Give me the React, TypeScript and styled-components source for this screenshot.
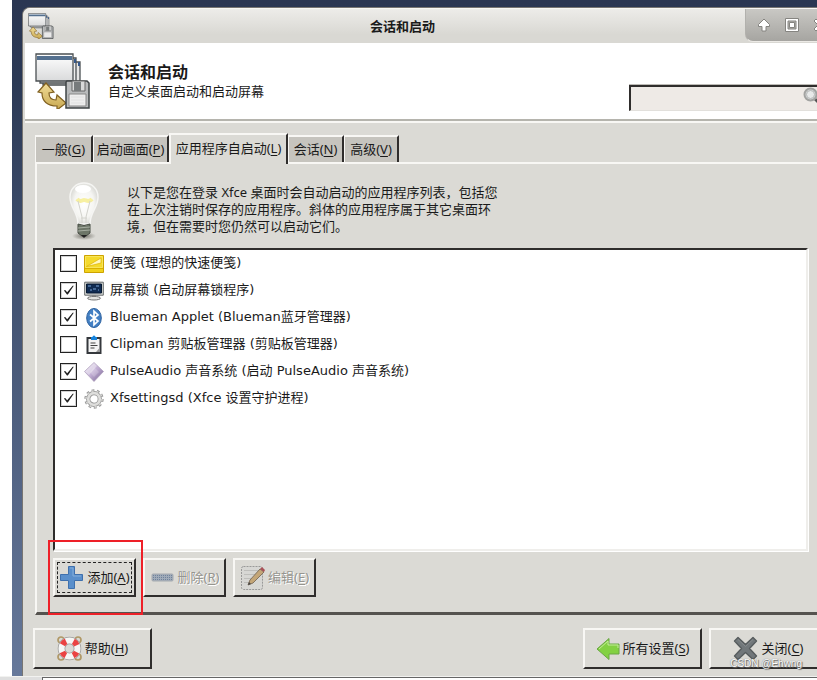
import React, { useState } from 'react';
import styled, { createGlobalStyle, css } from 'styled-components';

const face = '#dbdad5';
const dark = '#2f2d2c';
const light = '#f8f7f4';

const GlobalStyle = createGlobalStyle`
  *, *::before, *::after { box-sizing: border-box; }
  body {
    margin: 0;
    background: #fff;
    color: #1a1a1a;
    font: 13px/17px "DejaVu Sans", "Noto Sans CJK SC", sans-serif;
  }
  button, input { font: inherit; color: inherit; }
`;

const Screen = styled.div`
  min-height: 100vh;
  display: flex;
  flex-direction: column;
  overflow: hidden;
`;

const Desktop = styled.div`
  flex: 1;
  display: flex;
  margin-left: 12px;
  padding: 7px 0 0 10px;
  background: linear-gradient(#2a3652 0, #2b3955 12%, #3f4f6e 38%, #66789a 100%);
`;

const Window = styled.main`
  flex: 1 0 auto;
  width: calc(100% + 20px);
  display: flex;
  flex-direction: column;
  background: ${face};
  border: 1px solid #777572;
  border-bottom: 0;
  border-radius: 8px 0 0 0;
  overflow: hidden;
`;

const TitleBar = styled.header`
  height: 35px;
  display: flex;
  align-items: center;
  padding-left: 5px;
  background: linear-gradient(#edece9, #d9d8d3 75%);
  border-top: 1px solid #f7f6f4;
`;

const WindowTitle = styled.h1`
  flex: 1;
  margin: 0;
  padding-left: 6px;
  text-align: center;
  font-size: 13px;
  line-height: 17px;
  font-weight: 700;
`;

const WindowControls = styled.div`
  align-self: flex-start;
  width: 91px;
  height: 33px;
  display: flex;
  align-items: center;
  gap: 12px;
  padding-left: 10px;
  background: linear-gradient(#c9c8c4, #a6a5a1);
  border-left: 1px solid #b2b1ad;
  border-bottom: 1px solid #eceae6;
  border-radius: 0 0 0 8px;
`;

const ControlButton = styled.button`
  width: 16px;
  height: 16px;
  padding: 0;
  border: 0;
  background: none;
  display: block;
`;

const Banner = styled.section`
  height: 78px;
  display: flex;
  align-items: center;
  margin-left: 2px;
  padding: 0 7px 0 10px;
  background: #fff;
  border-bottom: 2px solid #b5b4ad;
  box-shadow: 0 2px 0 ${light};
`;

const BannerText = styled.div`
  flex: 1;
  padding-left: 17px;
`;

const Heading = styled.h2`
  margin: 0;
  font-size: 16px;
  line-height: 20px;
  font-weight: 700;
`;

const Subtitle = styled.p`
  margin: 0;
  line-height: 17px;
`;

const SearchBox = styled.label`
  align-self: flex-end;
  width: 200px;
  height: 26px;
  margin-bottom: 8px;
  padding-right: 5px;
  display: flex;
  background: #eeeae6;
  border: 2px solid ${dark};
  border-width: 2px 1px 1px 2px;
  border-bottom-color: #e2e0dc;
  box-shadow: 0 -1px 0 #bdbbb6;
`;

const SearchInput = styled.input`
  flex: 1;
  min-width: 0;
  border: 0;
  background: transparent;
  outline: 0;
`;

const Notebook = styled.section`
  flex: 1;
  display: flex;
  flex-direction: column;
  padding: 12px 0 0 12px;
`;

const TabList = styled.div`
  height: 29px;
  display: flex;
  align-items: flex-end;
  position: relative;
`;

const Tab = styled.button<{ $active: boolean; $width: number }>`
  width: ${p => p.$width}px;
  height: 27px;
  padding: 0;
  white-space: nowrap;
  background: #c6c4be;
  border: 2px solid ${light};
  border-width: 2px 2px 0 1px;
  border-right-color: ${dark};
  ${p => p.$active && css`
    height: 31px;
    margin-bottom: -2px;
    padding-bottom: 3px;
    background: ${face};
    border-left-width: 2px;
  `}
`;

const Mnemonic = styled.span`
  font-family: "Noto Sans", sans-serif;
  u { text-underline-offset: 2px; }
`;

const Panel = styled.div`
  flex: 1;
  display: flex;
  flex-direction: column;
  padding: 17px 28px 15px 16px;
  border-top: 2px solid ${light};
  border-left: 2px solid ${light};
  border-bottom: 3px solid #55534f;
`;

const Intro = styled.div`
  display: flex;
  align-items: flex-start;
  height: 67px;
  padding-left: 14px;
`;

const Description = styled.p`
  margin: 3px 0 0 26px;
  line-height: 17px;
  font-family: "Noto Sans", "Noto Sans CJK SC", sans-serif;
  white-space: nowrap;
  span { display: block; }
`;

const AppList = styled.ul`
  flex: 1;
  margin: 0;
  padding: 0;
  list-style: none;
  background: #fff;
  border: 2px solid ${dark};
  border-right-color: #efeeeb;
  border-bottom-color: #efeeeb;
  box-shadow: 1px 1px 0 #fff;
`;

const AppRow = styled.label`
  height: 27px;
  display: flex;
  align-items: center;
  padding-left: 5px;
  white-space: nowrap;
`;

const CheckBox = styled.input`
  appearance: none;
  width: 17px;
  height: 17px;
  margin: 0 7px 0 0;
  border: 1px solid #222;
  outline: 1px solid #77777755;
  outline-offset: -2px;
  background: #fff;
  &:checked::before {
    content: "";
    display: block;
    width: 11px;
    height: 10px;
    margin: 2px;
    background: #222;
    clip-path: polygon(8% 56%, 20% 50%, 38% 72%, 88% 8%, 98% 8%, 44% 96%, 36% 96%);
  }
`;

const AppName = styled.span`
  padding: 0 0 2px 6px;
`;

const Actions = styled.div`
  display: flex;
  gap: 7px;
  padding-top: 7px;
`;

const Marked = styled.div`
  position: relative;
`;

const RedFrame = styled.div`
  position: absolute;
  inset: -18px -7px -18px -5px;
  border: 2px solid #ee2028;
  pointer-events: none;
  z-index: 1;
`;

const PushButton = styled.button<{ $width: number; $tall?: boolean }>`
  width: ${p => p.$width}px;
  height: ${p => (p.$tall ? 41 : 39)}px;
  display: flex;
  align-items: center;
  justify-content: center;
  gap: 3px;
  padding: 0;
  white-space: nowrap;
  background: ${face};
  border: 2px solid ${light};
  border-right-color: ${dark};
  border-bottom-color: ${dark};
  &:disabled { color: #96958f; text-shadow: 1px 1px 0 #fff; }
`;

const FocusedButton = styled(PushButton)`
  outline: 1px dashed #222;
  outline-offset: -5px;
`;

const Footer = styled.footer`
  display: flex;
  gap: 7px;
  padding: 13px 8px 7px 10px;
  position: relative;
`;

const Spacer = styled.div`
  flex: 1;
`;

const Watermark = styled.span`
  position: absolute;
  right: 34px;
  bottom: 5px;
  font: 10px/14px "Liberation Sans", sans-serif;
  color: #fff;
  text-shadow: 0 0 1px #555, 1px 1px 1px #666;
`;

const PageEdge = styled.div`
  height: 4px;
  padding-left: 42px;
  background: #dfdfdf;
  border-top: 1px solid #f2f2f0;
`;

const PageSheet = styled.div`
  height: 3px;
  background: #fff;
  border: 1px solid #666;
  border-width: 1px 0 0 1px;
`;

const SessionIcon = ({ size }: { size: number }) => (
  <svg width={size} height={size} viewBox="0 0 56 56" aria-hidden="true">
    <defs>
      <linearGradient id="pane" x2="0" y2="1"><stop stopColor="#fff" /><stop offset="1" stopColor="#d9dadb" /></linearGradient>
      <linearGradient id="gold" x2="0" y2="1"><stop stopColor="#f0dc98" /><stop offset="1" stopColor="#c8a850" /></linearGradient>
    </defs>
    <g stroke="#4a4f52" strokeWidth="1.3">
      <path d="M8 9h37v23H8z" fill="#e5e5e5" />
      <path d="M5 5h36v25H5z" fill="#eee" />
      <path d="M1 1h37v27H1z" fill="url(#pane)" />
    </g>
    <path d="M2 3h35v4H2z" fill="#54708f" />
    <path d="M39 6h2v4h-2zM43 9h2v4h-2z" fill="#36598a" />
    <path d="M11 30l8 9-5 1c0 5 2 7 7 7l1-5 9 8-9 7v-4C12 53 7 48 7 40l-4-1z" fill="url(#gold)" stroke="#806020" strokeWidth="1.2" />
    <path d="M32 28h20l2 2v25H31V29z" fill="#b9bbbc" stroke="#3f4446" strokeWidth="1.5" />
    <path d="M37 28h13v10H37z" fill="#d9dada" stroke="#666" />
    <path d="M39 29h7v9h-7z" fill="#777b7c" />
    <path d="M34 41h17v12H34z" fill="#eee" stroke="#888" />
    <path d="M36 44h13M36 47h13M36 50h13" stroke="#e0e0e0" />
  </svg>
);

const BulbIcon = () => (
  <svg width="34" height="60" viewBox="0 0 34 60" aria-hidden="true">
    <defs>
      <radialGradient id="glass"><stop stopColor="#fff" /><stop offset=".7" stopColor="#f5f5f2" /><stop offset="1" stopColor="#dededa" /></radialGradient>
      <radialGradient id="shade"><stop stopColor="#77756d" /><stop offset="1" stopColor="#77756d" stopOpacity="0" /></radialGradient>
    </defs>
    <ellipse cx="17" cy="55" rx="12" ry="4" fill="url(#shade)" />
    <path d="M17 2C9 2 3 8 3 16c0 11 8 15 8 27h12c0-12 8-16 8-27C31 8 25 2 17 2z" fill="url(#glass)" stroke="#f5f5f3" strokeWidth="1.5" />
    <path d="M10 18c3 4 5 1 7 1s5 3 8-1" fill="none" stroke="#f5ec8b" strokeWidth="4" opacity=".8" />
    <path d="M11 20l4 16v6M23 20l-4 16v6M14 37h6" fill="none" stroke="#d2d2cc" />
    <ellipse cx="16" cy="8" rx="8" ry="4" fill="#fff" />
    <path d="M11 43q6 3 12 0v9l-4 3h-4l-4-3z" fill="#6d7668" stroke="#464c43" />
    <path d="M11 47l12-1M11 50l12-1" stroke="#a7aea2" />
    <path d="M14 54h6l-3 3z" fill="#222" />
  </svg>
);

const NoteIcon = () => (
  <svg width="20" height="20" viewBox="0 0 20 20" aria-hidden="true">
    <path d="M.5 1.5h19v17H.5z" fill="#f1d21c" stroke="#cda300" />
    <path d="M1.5 2.5h17v11h-17z" fill="#f5da2c" stroke="#f8e55b" />
    <path d="M2.500 12.500L17 4v5l-6 1.500z" fill="#fff7c0" stroke="#dcb300" strokeWidth=".7" />
    <path d="M1 14.500h18" stroke="#d9b000" />
  </svg>
);

const MonitorIcon = () => (
  <svg width="20" height="20" viewBox="0 0 20 20" aria-hidden="true">
    <path d="M.7 1.2h18.6v13H.7z" fill="#d9dbd8" stroke="#65696a" />
    <path d="M2.500 3h15v9h-15z" fill="#102b52" stroke="#071932" />
    <path d="M4 5h3M9 8h3M12 5h3M6 9h2M14 9h1" stroke="#7ba5d8" strokeWidth="1.200" />
    <path d="M8 14h4v2.500H8z" fill="#888" /><ellipse cx="10" cy="17.200" rx="6.500" ry="1.800" fill="#e3e3e0" stroke="#777" />
  </svg>
);

const BluetoothIcon = () => (
  <svg width="20" height="20" viewBox="0 0 20 20" aria-hidden="true">
    <ellipse cx="10" cy="10" rx="7.300" ry="9.500" fill="#4380c4" stroke="#2a5f9e" />
    <path d="M6 6.500l8 6.500-4 3.800V3.200L14 7l-8 6.500" fill="none" stroke="#fff" strokeWidth="1.700" />
  </svg>
);

const ClipboardIcon = () => (
  <svg width="20" height="20" viewBox="0 0 20 20" aria-hidden="true">
    <path d="M2.500 2h15v17h-15z" fill="#35383c" />
    <path d="M4.500 4h11v13h-11z" fill="#f4f4f4" />
    <path d="M7 5V2h1.500a1.500 1.500 0 013 0H13v3z" fill="#1683dc" />
    <path d="M6.500 8h5M6.500 10.500h7M6.500 13h4" stroke="#444" /><path d="M12 17l3.500-4v4z" fill="#999" />
  </svg>
);

const PulseIcon = () => (
  <svg width="20" height="20" viewBox="0 0 20 20" aria-hidden="true">
    <defs><linearGradient id="pulse" x2="1" y2="1"><stop stopColor="#f0e9f5" /><stop offset=".5" stopColor="#c0add3" /><stop offset="1" stopColor="#75618f" /></linearGradient></defs>
    <path d="M10 .5L19.500 9.500 10 19.500.5 9.500z" fill="url(#pulse)" stroke="#aa9bb9" strokeWidth=".7" />
    <path d="M10 5l5 5-5 5-4-5z" fill="#fff" opacity=".2" />
    <path d="M1 9.500L10 1l3 3-8 9z" fill="#fff" opacity=".35" />
  </svg>
);

const GearIcon = () => (
  <svg width="20" height="20" viewBox="0 0 20 20" aria-hidden="true">
    <circle cx="10" cy="10" r="8.300" fill="none" stroke="#999" strokeWidth="2.800" strokeDasharray="2.700 2.515" />
    <circle cx="10" cy="10" r="5.800" fill="none" stroke="#929292" strokeWidth="4.200" />
    <circle cx="10" cy="10" r="5.800" fill="none" stroke="#dededc" strokeWidth="2.700" />
    <circle cx="10" cy="10" r="8" fill="none" stroke="#d5d5d3" strokeWidth="1.600" strokeDasharray="1.900 3.127" />
  </svg>
);

const PlusIcon = () => (
  <svg width="25" height="25" viewBox="0 0 25 25" aria-hidden="true">
    <path d="M9.500 1.500h6v8h8v6h-8v8h-6v-8h-8v-6h8z" fill="#5a8fcb" stroke="#3f70ad" />
    <path d="M11 3h3v8h8" fill="none" stroke="#83aedb" />
  </svg>
);

const MinusIcon = () => (
  <svg width="25" height="25" viewBox="0 0 25 25" aria-hidden="true">
    <rect x="2" y="9" width="21" height="7" rx="1" fill="#a0abb9" stroke="#a4a9af" />
    <path d="M3 10.500h19M3 12.500h19M3 14.500h19" stroke="#70829b" strokeDasharray="1 1" />
  </svg>
);

const EditIcon = () => (
  <svg width="25" height="25" viewBox="0 0 25 25" aria-hidden="true">
    <rect x="1.500" y="1.500" width="21" height="23" rx="2" fill="#d7d7d4" stroke="#999" strokeDasharray="2 1" />
    <path d="M4 5.500h14M4 9.500h12M4 13.500h9M4 17.500h5" stroke="#bebebb" />
    <path d="M8 20l2-5L20 4l4 3-11 11z" fill="#c4a677" stroke="#827360" /><path d="M20 4l2-2 3 3-1 2z" fill="#a95157" /><path d="M8 20l1-3 2 2z" fill="#444" />
  </svg>
);

const HelpIcon = () => (
  <svg width="25" height="25" viewBox="0 0 25 25" aria-hidden="true">
    <g fill="none" stroke="#b09866" strokeWidth="1.700"><circle cx="4" cy="4" r="3" /><circle cx="21" cy="4" r="3" /><circle cx="4" cy="21" r="3" /><circle cx="21" cy="21" r="3" /></g>
    <circle cx="12.500" cy="12.500" r="8" fill="none" stroke="#999" strokeWidth="7.500" />
    <circle cx="12.500" cy="12.500" r="8" fill="none" stroke="#f6f6f5" strokeWidth="6" />
    <circle cx="12.500" cy="12.500" r="8" fill="none" stroke="#ea4343" strokeWidth="6" strokeDasharray="5 7.566" strokeDashoffset="-3.783" />
  </svg>
);

const BackIcon = () => (
  <svg width="24" height="24" viewBox="0 0 24 24" aria-hidden="true">
    <path d="M1 12L13 1.500V7h10v10H13v5.500z" fill="#83d142" stroke="#6aa644" />
    <path d="M3 12l9-8v4h10v3" fill="none" stroke="#c3eb9a" />
  </svg>
);

const CloseIcon = () => (
  <svg width="25" height="25" viewBox="0 0 25 25" aria-hidden="true">
    <path d="M5 1.500l7.500 7 7.500-7 3.500 3.500-7 7.500 7 7.500-3.500 3.500-7.500-7-7.500 7L1.500 20l7-7.500-7-7.500z" fill="#71777a" stroke="#575c5e" strokeWidth="1.400" strokeLinejoin="round" />
    <path d="M5 3.500l7.500 7 7.500-7" fill="none" stroke="#868b8d" />
  </svg>
);

const SearchIcon = () => (
  <svg width="20" height="20" viewBox="0 0 20 20" aria-hidden="true">
    <path d="M11 11l6 6" stroke="#555" strokeWidth="3" />
    <circle cx="7.500" cy="7.500" r="6" fill="#d5d8d9" stroke="#a2a3a1" strokeWidth="2" />
    <circle cx="7.500" cy="7.500" r="4" fill="#e7e9e9" stroke="#b6b8b8" />
  </svg>
);

const controls = [
  { label: '卷起', art: <path d="M8 2l5.500 5.500v2H10V14H6V9.500H2.500v-2z" /> },
  { label: '最大化', art: <path fillRule="evenodd" d="M1.500 1.500h13v13h-13zM4 4v8h8V4zM5.500 5.500h5v5h-5z" /> },
  { label: '关闭窗口', art: <path d="M4 2l4 4 4-4 2 2-4 4 4 4-2 2-4-4-4 4-2-2 4-4-4-4z" /> },
];

const tabs = [
  { text: '一般', key: 'G', width: 58 },
  { text: '启动画面', key: 'P', width: 76 },
  { text: '应用程序自启动', key: 'L', width: 119 },
  { text: '会话', key: 'N', width: 56 },
  { text: '高级', key: 'V', width: 55 },
];

const apps = [
  { name: '便笺 (理想的快速便笺)', on: false, icon: <NoteIcon /> },
  { name: '屏幕锁 (启动屏幕锁程序)', on: true, icon: <MonitorIcon /> },
  { name: 'Blueman Applet (Blueman蓝牙管理器)', on: true, icon: <BluetoothIcon /> },
  { name: 'Clipman 剪贴板管理器 (剪贴板管理器)', on: false, icon: <ClipboardIcon /> },
  { name: 'PulseAudio 声音系统 (启动 PulseAudio 声音系统)', on: true, icon: <PulseIcon /> },
  { name: 'Xfsettingsd (Xfce 设置守护进程)', on: true, icon: <GearIcon /> },
];

const Caption = ({ text, k }: { text: string; k: string }) => (
  <span>{text}<Mnemonic>(<u>{k}</u>)</Mnemonic></span>
);

export default function App() {
  const [active, setActive] = useState(2);
  return (
    <Screen>
      <GlobalStyle />
      <Desktop>
        <Window>
          <TitleBar>
            <SessionIcon size={26} />
            <WindowTitle>会话和启动</WindowTitle>
            <WindowControls>
              {controls.map(c => (
                <ControlButton key={c.label} aria-label={c.label}>
                  <svg width="16" height="16" viewBox="0 0 16 16" fill="#fff" stroke="#858480" strokeWidth="1">{c.art}</svg>
                </ControlButton>
              ))}
            </WindowControls>
          </TitleBar>
          <Banner>
            <SessionIcon size={56} />
            <BannerText>
              <Heading>会话和启动</Heading>
              <Subtitle>自定义桌面启动和启动屏幕</Subtitle>
            </BannerText>
            <SearchBox>
              <SearchInput type="text" aria-label="搜索" />
              <SearchIcon />
            </SearchBox>
          </Banner>
          <Notebook>
            <TabList role="tablist">
              {tabs.map((t, i) => (
                <Tab key={t.key} role="tab" aria-selected={i === active} $active={i === active} $width={t.width} onClick={() => setActive(i)}>
                  <Caption text={t.text} k={t.key} />
                </Tab>
              ))}
            </TabList>
            <Panel role="tabpanel">
              <Intro>
                <BulbIcon />
                <Description>
                  <span>以下是您在登录 Xfce 桌面时会自动启动的应用程序列表，包括您</span>
                  <span>在上次注销时保存的应用程序。斜体的应用程序属于其它桌面环</span>
                  <span>境，但在需要时您仍然可以启动它们。</span>
                </Description>
              </Intro>
              <AppList>
                {apps.map(a => (
                  <li key={a.name}>
                    <AppRow>
                      <CheckBox type="checkbox" defaultChecked={a.on} />
                      {a.icon}
                      <AppName>{a.name}</AppName>
                    </AppRow>
                  </li>
                ))}
              </AppList>
              <Actions>
                <Marked>
                  <FocusedButton $width={83}><PlusIcon /><Caption text="添加" k="A" /></FocusedButton>
                  <RedFrame />
                </Marked>
                <PushButton $width={83} disabled><MinusIcon /><Caption text="删除" k="R" /></PushButton>
                <PushButton $width={83} disabled><EditIcon /><Caption text="编辑" k="E" /></PushButton>
              </Actions>
            </Panel>
          </Notebook>
          <Footer>
            <PushButton $width={119} $tall><HelpIcon /><Caption text="帮助" k="H" /></PushButton>
            <Spacer />
            <PushButton $width={119} $tall><BackIcon /><Caption text="所有设置" k="S" /></PushButton>
            <PushButton $width={119} $tall><CloseIcon /><Caption text="关闭" k="C" /></PushButton>
            <Watermark>CSDN @Ehwng</Watermark>
          </Footer>
        </Window>
      </Desktop>
      <PageEdge><PageSheet /></PageEdge>
    </Screen>
  );
}
